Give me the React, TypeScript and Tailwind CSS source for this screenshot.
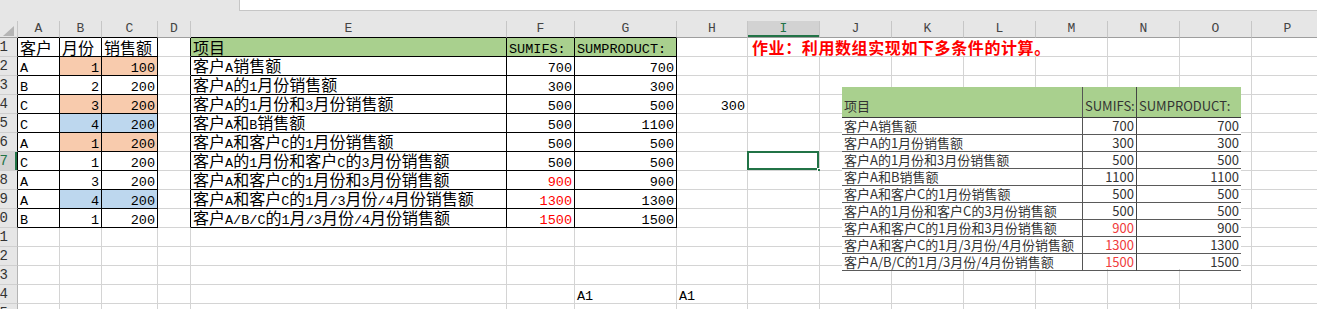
import clsx from 'clsx'

const COLS = ['A', 'B', 'C', 'D', 'E', 'F', 'G', 'H', 'I', 'J', 'K', 'L', 'M', 'N', 'O', 'P']

type Cell = { v: string; right?: boolean; bg?: string; red?: boolean }

const customers = ['A', 'B', 'C', 'C', 'A', 'C', 'A', 'A', 'B']
const months = ['1', '2', '3', '4', '1', '1', '3', '4', '1']
const sales = ['100', '200', '200', '200', '200', '200', '200', '200', '200']
const fills = ['o', '', 'o', 'b', 'o', '', '', 'b', '']
const items = [
  '客户A销售额',
  '客户A的1月份销售额',
  '客户A的1月份和3月份销售额',
  '客户A和B销售额',
  '客户A和客户C的1月份销售额',
  '客户A的1月份和客户C的3月份销售额',
  '客户A和客户C的1月份和3月份销售额',
  '客户A和客户C的1月/3月份/4月份销售额',
  '客户A/B/C的1月/3月份/4月份销售额',
]
const sumifs = ['700', '300', '500', '500', '500', '500', '900', '1300', '1500']
const sumprod = ['700', '300', '500', '1100', '500', '500', '900', '1300', '1500']
const picSumifs = ['700', '300', '500', '1100', '500', '500', '900', '1300', '1500']

const cells: Record<string, Cell> = {
  A1: { v: '客户' },
  B1: { v: '月份' },
  C1: { v: '销售额' },
  E1: { v: '项目', bg: 'bg-[#a9d08e]' },
  F1: { v: 'SUMIFS:', bg: 'bg-[#a9d08e]' },
  G1: { v: 'SUMPRODUCT:', bg: 'bg-[#a9d08e]' },
  H4: { v: '300', right: true },
  G14: { v: 'A1' },
  H14: { v: 'A1' },
}

customers.forEach((c, i) => {
  const r = i + 2
  const bg = fills[i] === 'o' ? 'bg-[#f8cbad]' : fills[i] === 'b' ? 'bg-[#bdd7ee]' : undefined
  cells['A' + r] = { v: c }
  cells['B' + r] = { v: months[i], right: true, bg }
  cells['C' + r] = { v: sales[i], right: true, bg }
  cells['E' + r] = { v: items[i] }
  cells['F' + r] = { v: sumifs[i], right: true, red: i >= 6 }
  cells['G' + r] = { v: sumprod[i], right: true }
})

// latin runs get a narrower mono face so they sit at half width like SimSun
function Txt({ s }: { s: string }) {
  return (
    <span className="block leading-[18px]">
      {s.split(/([!-~]+)/).map((p, i) =>
        p === '' ? null : /[!-~]/.test(p) ? (
          <span key={i} className="font-['Liberation_Mono',monospace] text-[13.5px] leading-none">
            {p}
          </span>
        ) : (
          <span key={i}>{p}</span>
        )
      )}
    </span>
  )
}

function ColHeader({ col }: { col: string }) {
  const boxed = 'ABCEFG'.includes(col)
  const active = col === 'I'
  return (
    <div
      className={clsx(
        "flex items-center justify-center border-r border-b border-r-[#c6c6c6] font-['Liberation_Mono',monospace] text-[13px]",
        boxed ? 'border-b-black' : 'border-b-[#9e9e9e]',
        active ? 'bg-[#d2d2d2] text-[#217346] shadow-[inset_0_-2px_0_#217346]' : 'bg-[#e6e6e6] text-[#444]'
      )}
    >
      {col}
    </div>
  )
}

function RowHeader({ row }: { row: number }) {
  const active = row === 7
  return (
    <div
      className={clsx(
        "flex items-center justify-end pr-[9px] overflow-hidden border-r border-b border-b-[#cfcfcf] font-['Liberation_Mono',monospace] text-[14px]",
        row <= 10 ? 'border-r-black' : 'border-r-[#b4b4b4]',
        active ? 'bg-[#d2d2d2] text-[#217346] shadow-[inset_-2px_0_0_#217346]' : 'bg-[#e6e6e6] text-[#333]'
      )}
    >
      {row}
    </div>
  )
}

function SheetCell({ col, row }: { col: string; row: number }) {
  const c = cells[col + row]
  const inTable = row >= 1 && row <= 10
  const boxed = inTable && 'ABCEFG'.includes(col)
  const rightBlack = boxed || (col === 'D' && inTable)
  return (
    <div
      className={clsx(
        'relative flex items-end whitespace-nowrap border-r border-b',
        rightBlack ? 'border-r-black' : 'border-r-[#d4d4d4]',
        boxed ? 'border-b-black' : 'border-b-[#d4d4d4]',
        c?.right ? 'justify-end pr-[2px]' : 'pl-[2px]',
        c?.bg ?? 'bg-white',
        c?.red ? 'text-[#ff0000]' : 'text-black'
      )}
    >
      {c && <Txt s={c.v} />}
    </div>
  )
}

function SelectedCell() {
  return (
    <div className="relative border-r border-b border-[#d4d4d4] bg-white">
      <div className="absolute -left-px -top-px w-[calc(100%+1px)] h-[calc(100%+1px)] border-2 border-[#217346]" />
      <div className="absolute -right-[4px] -bottom-[4px] w-[6px] h-[6px] bg-[#217346] border border-white" />
    </div>
  )
}

function SheetRow({ row }: { row: number }) {
  const out = [<RowHeader key="h" row={row} />]
  for (let i = 0; i < COLS.length; i++) {
    const col = COLS[i]
    if (row === 1 && col === 'I') {
      out.push(
        <div
          key={col}
          className="col-span-5 flex items-end pl-[4px] border-r border-b border-[#d4d4d4] bg-white whitespace-nowrap leading-[18px] font-bold text-[16px] tracking-[0.6px] text-[#ff0000]"
        >
          作业：利用数组实现如下多条件的计算。
        </div>
      )
      i += 4
      continue
    }
    if (row === 7 && col === 'I') {
      out.push(<SelectedCell key={col} />)
      continue
    }
    out.push(<SheetCell key={col} col={col} row={row} />)
  }
  return <>{out}</>
}

function PastedTable() {
  return (
    <div className="absolute left-[842px] top-[87px] w-[399px] h-[182px] bg-white grid grid-cols-[241px_54px_104px] grid-rows-[31px_repeat(9,1fr)] font-['Noto_Sans_CJK_SC',sans-serif] text-[13px] text-[#333]">
      <div className="flex items-end pb-[2px] pl-[2px] bg-[#a9d08e] border-b border-r border-[#3c3c3c] border-r-[#555]">项目</div>
      <div className="flex items-end pb-[2px] pl-[2px] bg-[#a9d08e] border-b border-r border-[#3c3c3c] border-r-[#444]">SUMIFS:</div>
      <div className="flex items-end pb-[2px] pl-[2px] bg-[#a9d08e] border-b border-[#3c3c3c]">SUMPRODUCT:</div>
      {items.map((it, i) => (
        <div key={it} className="contents">
          <div className="flex items-center pl-[2px] leading-[16px] whitespace-nowrap border-b border-r border-b-[#5a5a5a] border-r-[#555]">{it}</div>
          <div
            className={clsx(
              'flex items-center justify-end pr-[2px] leading-[16px] border-b border-r border-b-[#5a5a5a] border-r-[#444]',
              i >= 6 ? 'text-[#f03c3c]' : 'text-[#333]'
            )}
          >
            {picSumifs[i]}
          </div>
          <div className="flex items-center justify-end pr-[2px] leading-[16px] border-b border-b-[#5a5a5a]">{sumprod[i]}</div>
        </div>
      ))}
    </div>
  )
}

export default function App() {
  const rows = Array.from({ length: 15 }, (_, i) => i + 1)
  return (
    <div className="relative w-[1317px] h-[309px] overflow-hidden bg-white font-['Noto_Sans_CJK_SC',sans-serif] text-[16px]">
      <div className="h-[21px] flex bg-[#e6e6e6]">
        <div className="w-[239px]" />
        <div className="flex-1 h-[11px] bg-white border-l border-b border-[#c6c6c6]" />
      </div>
      <div className="grid grid-cols-[18px_42px_42px_56px_33px_316px_68px_102px_71px_72px_72px_72px_72px_72px_72px_72px_72px] grid-rows-[17px_repeat(15,19px)]">
        <div className="relative bg-[#e6e6e6] border-r border-b border-r-[#c6c6c6] border-b-[#9e9e9e]">
          <svg className="absolute left-[3px] top-[5px]" width="11" height="10" viewBox="0 0 11 10">
            <polygon points="0,10 11,10 11,0" fill="#b5b5b5" />
          </svg>
        </div>
        {COLS.map((c) => (
          <ColHeader key={c} col={c} />
        ))}
        {rows.map((r) => (
          <SheetRow key={r} row={r} />
        ))}
      </div>
      <PastedTable />
    </div>
  )
}
